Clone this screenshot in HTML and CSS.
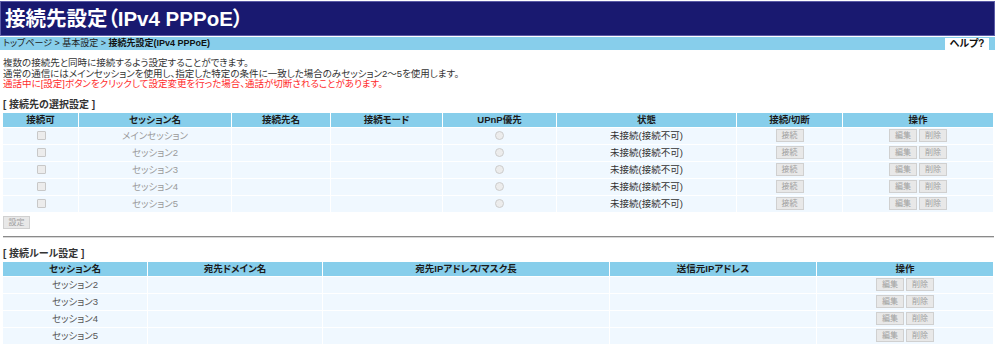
FILE: index.html
```html
<!DOCTYPE html>
<html lang="ja">
<head>
<meta charset="utf-8">
<title>接続先設定（IPv4 PPPoE）</title>
<link rel="stylesheet" href="styles.css">
</head>
<body>
<div class="page">
  <div class="title-bar"><h1 class="title">接続先設定（IPv4 PPPoE）</h1></div>
  <div class="crumb-bar">
    <div class="crumbs">トップページ &gt; 基本設定 &gt; <b>接続先設定(IPv4 PPPoE)</b></div>
    <div class="help">ヘルプ?</div>
  </div>
  <div class="intro">
    <p>複数の接続先と同時に接続するよう設定することができます。</p>
    <p>通常の通信にはメインセッションを使用し、指定した特定の条件に一致した場合のみセッション2～5を使用します。</p>
    <p class="warn">通話中に[設定]ボタンをクリックして設定変更を行った場合、通話が切断されることがあります。</p>
  </div>

  <div class="section-title">[ 接続先の選択設定 ]</div>
  <table class="grid grid-sel">
    <colgroup>
      <col class="c75"><col class="c152"><col class="c98"><col class="c111"><col class="c113"><col class="c179"><col class="c105"><col class="c150">
    </colgroup>
    <thead>
      <tr><th>接続可</th><th>セッション名</th><th>接続先名</th><th>接続モード</th><th>UPnP優先</th><th>状態</th><th>接続/切断</th><th>操作</th></tr>
    </thead>
    <tbody>
      <tr><td><input class="cb" type="checkbox" disabled></td><td class="dim">メインセッション</td><td></td><td></td><td><input class="rb" type="radio" disabled></td><td class="state">未接続(接続不可)</td><td><button class="btn" disabled>接続</button></td><td><button class="btn" disabled>編集</button><button class="btn" disabled>削除</button></td></tr>
      <tr><td><input class="cb" type="checkbox" disabled></td><td class="dim">セッション2</td><td></td><td></td><td><input class="rb" type="radio" disabled></td><td class="state">未接続(接続不可)</td><td><button class="btn" disabled>接続</button></td><td><button class="btn" disabled>編集</button><button class="btn" disabled>削除</button></td></tr>
      <tr><td><input class="cb" type="checkbox" disabled></td><td class="dim">セッション3</td><td></td><td></td><td><input class="rb" type="radio" disabled></td><td class="state">未接続(接続不可)</td><td><button class="btn" disabled>接続</button></td><td><button class="btn" disabled>編集</button><button class="btn" disabled>削除</button></td></tr>
      <tr><td><input class="cb" type="checkbox" disabled></td><td class="dim">セッション4</td><td></td><td></td><td><input class="rb" type="radio" disabled></td><td class="state">未接続(接続不可)</td><td><button class="btn" disabled>接続</button></td><td><button class="btn" disabled>編集</button><button class="btn" disabled>削除</button></td></tr>
      <tr><td><input class="cb" type="checkbox" disabled></td><td class="dim">セッション5</td><td></td><td></td><td><input class="rb" type="radio" disabled></td><td class="state">未接続(接続不可)</td><td><button class="btn" disabled>接続</button></td><td><button class="btn" disabled>編集</button><button class="btn" disabled>削除</button></td></tr>
    </tbody>
  </table>
  <div class="actions"><button class="btn btn-set" disabled>設定</button></div>

  <hr class="divider">

  <div class="section-title section-title-2">[ 接続ルール設定 ]</div>
  <table class="grid grid-rule">
    <colgroup>
      <col class="c144"><col class="c174"><col class="c286"><col class="c206"><col class="c176">
    </colgroup>
    <thead>
      <tr><th>セッション名</th><th>宛先ドメイン名</th><th>宛先IPアドレス/マスク長</th><th>送信元IPアドレス</th><th>操作</th></tr>
    </thead>
    <tbody>
      <tr><td class="name">セッション2</td><td></td><td></td><td></td><td><button class="btn" disabled>編集</button><button class="btn" disabled>削除</button></td></tr>
      <tr><td class="name">セッション3</td><td></td><td></td><td></td><td><button class="btn" disabled>編集</button><button class="btn" disabled>削除</button></td></tr>
      <tr><td class="name">セッション4</td><td></td><td></td><td></td><td><button class="btn" disabled>編集</button><button class="btn" disabled>削除</button></td></tr>
      <tr><td class="name">セッション5</td><td></td><td></td><td></td><td><button class="btn" disabled>編集</button><button class="btn" disabled>削除</button></td></tr>
    </tbody>
  </table>
</div>
</body>
</html>
```

FILE: styles.css
```css
html, body {
  margin: 0;
  padding: 0;
  background: #ffffff;
}
body {
  font-family: "Liberation Sans", "Noto Sans CJK JP", sans-serif;
  font-size: 9.5px;
  color: #333333;
  font-feature-settings: "palt";
}
.page {
  width: 995px;
}
.title-bar {
  margin-top: 1px;
  height: 33px;
  background: #191970;
  border: 1px solid #5a5aa6;
  box-sizing: content-box;
  width: 993px;
  display: flex;
  align-items: center;
}
.title {
  margin: 0 0 0 4px;
  font-size: 20.5px;
  line-height: 24px;
  font-weight: bold;
  color: #ffffff;
  font-feature-settings: "palt";
}
.crumb-bar {
  margin-top: 1px;
  height: 13px;
  background: #87ceeb;
  display: flex;
  align-items: center;
  width: 995px;
}
.crumbs {
  padding-left: 3px;
  font-size: 9px;
  line-height: 13px;
  color: #222222;
}
.crumbs b {
  color: #111111;
}
.help {
  margin-left: auto;
  margin-right: 6px;
  width: 44px;
  height: 12px;
  background: #ffffff;
  font-weight: bold;
  font-size: 10px;
  line-height: 12px;
  color: #111111;
  text-align: center;
  align-self: flex-end;
}
.intro {
  margin: 8px 0 0 3px;
}
.intro p {
  margin: 0;
  line-height: 10.5px;
}
.intro .warn {
  color: #ff2a2a;
}
.section-title {
  margin: 9px 0 0 3px;
  font-weight: bold;
  font-size: 10px;
  line-height: 12px;
  color: #333333;
}
.section-title-2 {
  margin-top: 10px;
}
.grid {
  margin-left: 2px;
  border-collapse: separate;
  border-spacing: 1px;
  table-layout: fixed;
  background: #ffffff;
}
.grid-sel { width: 992px; margin-top: 1px; }
.grid-rule { width: 992px; margin-top: 1px; }
.c75 { width: 75px; }
.c152 { width: 152px; }
.c98 { width: 98px; }
.c111 { width: 111px; }
.c113 { width: 113px; }
.c179 { width: 179px; }
.c105 { width: 105px; }
.c150 { width: 150px; }
.c144 { width: 144px; }
.c174 { width: 174px; }
.c286 { width: 286px; }
.c206 { width: 206px; }
.c176 { width: 176px; }
.grid th {
  background: #87ceeb;
  height: 14px;
  padding: 0;
  font-size: 9.5px;
  line-height: 14px;
  font-weight: bold;
  color: #1a1a1a;
  text-align: center;
}
.grid td {
  background: #f0f8ff;
  height: 16px;
  padding: 0;
  line-height: 16px;
  text-align: center;
  vertical-align: middle;
  white-space: nowrap;
}
.grid td.dim {
  color: #9a9a9a;
}
.grid td.state {
  color: #333333;
}
.grid td.name {
  color: #555555;
}
.cb {
  appearance: none;
  -webkit-appearance: none;
  width: 9px;
  height: 9px;
  margin: 0 0 0 1px;
  border: 1px solid #c8c8c8;
  background: #ececec;
  border-radius: 1px;
  vertical-align: middle;
  box-sizing: border-box;
}
.rb {
  appearance: none;
  -webkit-appearance: none;
  width: 9px;
  height: 9px;
  margin: 0;
  border: 1px solid #cccccc;
  background: #ececec;
  border-radius: 50%;
  vertical-align: middle;
  box-sizing: border-box;
}
.btn {
  width: 28px;
  height: 13px;
  padding: 0;
  margin: 0 1px;
  border: 1px solid #d0d0d0;
  background: #e8e8e8;
  color: #a0a0a0;
  font-family: "Liberation Sans", "Noto Sans CJK JP", sans-serif;
  font-size: 8px;
  line-height: 11px;
  vertical-align: middle;
  box-sizing: border-box;
}
.actions {
  margin: 3px 0 0 3px;
  height: 13px;
}
.btn-set {
  margin: 0;
  width: 27px;
  display: block;
}
.divider {
  margin: 7px 0 0 3px;
  width: 991px;
  height: 0;
  border: 0;
  border-top: 1px solid #8a8a8a;
  border-bottom: 1px solid #d8d8d8;
}
```
